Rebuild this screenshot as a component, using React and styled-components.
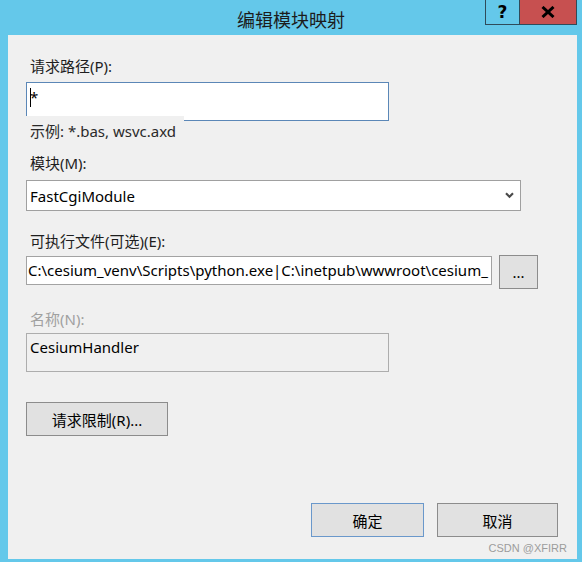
import React from "react";
import styled, { createGlobalStyle } from "styled-components";

const GlobalStyle = createGlobalStyle`
  html, body {
    margin: 0;
    padding: 0;
    background: #64c8ea;
  }
  body {
    font-family: "Noto Sans", "Noto Sans CJK SC", sans-serif;
    font-size: 15px;
    color: #1a1a1a;
  }
`;

const Window = styled.div`
  width: 582px;
  height: 562px;
  display: flex;
  flex-direction: column;
  background: #64c8ea;
  overflow: hidden;
`;

const TitleBar = styled.header`
  flex: none;
  height: 35px;
  position: relative;
  display: flex;
  justify-content: center;
`;

const Title = styled.div`
  font-family: "Noto Sans CJK SC", sans-serif;
  font-size: 18px;
  line-height: 26px;
  padding-top: 6px;
  color: #1c1c1c;
`;

const CaptionButtons = styled.div`
  position: absolute;
  top: 0;
  right: 5px;
  height: 25px;
  display: flex;
  box-sizing: border-box;
  border: 1px solid #2f4b5a;
  border-top: none;
`;

const CaptionButton = styled.div`
  width: ${(p) => p.w}px;
  display: flex;
  align-items: center;
  justify-content: center;
  background: ${(p) => (p.close ? "#c75050" : "transparent")};
  border-left: ${(p) => (p.close ? "1px solid #2f4b5a" : "none")};
  font-family: "DejaVu Sans", sans-serif;
  font-weight: 700;
  font-size: 17px;
  color: #000;
`;

const Client = styled.main`
  flex: 1;
  margin: 0 5px 3px 8px;
  background: #f0f0f0;
  position: relative;
  display: flex;
  flex-direction: column;
  align-items: flex-start;
  padding: 21px 0 22px 18px;
`;

const Label = styled.div`
  line-height: 20px;
  margin-top: ${(p) => p.top || 0}px;
  padding-left: 4px;
  color: ${(p) => (p.disabled ? "#a0a0a0" : "#1e1e1e")};
`;

const TextBox = styled.div`
  box-sizing: border-box;
  width: ${(p) => p.w}px;
  height: ${(p) => p.h}px;
  margin-top: ${(p) => p.top || 0}px;
  padding: 4px 3px;
  line-height: 19px;
  white-space: nowrap;
  overflow: hidden;
  background: ${(p) => (p.disabled ? "#f0f0f0" : "#fff")};
  border: 1px solid
    ${(p) => (p.focused ? "#5b87b7" : p.disabled ? "#adadad" : "#a3a3a3")};
  color: #000;
`;

const Caret = styled.span`
  display: inline-block;
  width: 1px;
  height: 19px;
  background: #000;
  vertical-align: top;
  margin-right: -1px;
`;

const Hint = styled.div`
  position: relative;
  margin-top: -5px;
  padding: 6px 8px 0 4px;
  line-height: 18px;
  background: #f0f0f0;
  color: #2a2a2a;
`;

const Select = styled.div`
  box-sizing: border-box;
  width: 495px;
  height: 31px;
  margin-top: 7px;
  padding: 0 6px 0 3px;
  display: flex;
  align-items: center;
  justify-content: space-between;
  background: #fff;
  border: 1px solid #a0a0a0;
  color: #000;
`;

const PathRow = styled.div`
  display: flex;
  align-items: flex-start;
  gap: 7px;
  margin-top: 4px;
`;

const PathBox = styled(TextBox)`
  padding: 0 1px;
  line-height: 27px;
  margin-top: 1px;
`;

const Button = styled.button`
  box-sizing: border-box;
  width: ${(p) => p.w}px;
  height: 34px;
  margin-top: ${(p) => p.top || 0}px;
  padding: 0;
  font-family: "Noto Sans", "Noto Sans CJK SC", sans-serif;
  font-size: 15px;
  color: #000;
  background: #e1e1e1;
  border: 1px solid ${(p) => (p.primary ? "#6a98cb" : "#8c8c8c")};
  border-radius: 0;
`;

const Footer = styled.div`
  margin-top: auto;
  align-self: stretch;
  display: flex;
  justify-content: flex-end;
  gap: 13px;
  padding-right: 19px;
`;

const Watermark = styled.div`
  position: absolute;
  right: 10px;
  bottom: 5px;
  font-family: "Liberation Sans", sans-serif;
  font-size: 11px;
  line-height: 12px;
  color: #9c9c9c;
`;

const Chevron = () => (
  <svg width="9" height="7" viewBox="0 0 9 7">
    <path d="M1 1.2 L4.5 4.8 L8 1.2" fill="none" stroke="#4a4a4a" strokeWidth="2.1" />
  </svg>
);

const CloseGlyph = () => (
  <svg width="14" height="12" viewBox="0 0 14 12">
    <path d="M1.5 1 L12.5 11 M12.5 1 L1.5 11" stroke="#000" strokeWidth="3" />
  </svg>
);

export default function App() {
  return (
    <>
      <GlobalStyle />
      <Window>
        <TitleBar>
          <Title>编辑模块映射</Title>
          <CaptionButtons>
            <CaptionButton w={33}>?</CaptionButton>
            <CaptionButton w={56} close>
              <CloseGlyph />
            </CaptionButton>
          </CaptionButtons>
        </TitleBar>
        <Client>
          <Label>请求路径(P):</Label>
          <TextBox w={363} h={39} top={6} focused style={{ paddingTop: 5 }}>
            <Caret />*
          </TextBox>
          <Hint>示例: *.bas, wsvc.axd</Hint>

          <Label top={13}>模块(M):</Label>
          <Select>
            <span>FastCgiModule</span>
            <Chevron />
          </Select>

          <Label top={20}>可执行文件(可选)(E):</Label>
          <PathRow>
            <PathBox w={466} h={29}>
              C:\cesium_venv\Scripts\python.exe|C:\inetpub\wwwroot\cesium_
            </PathBox>
            <Button w={39}>...</Button>
          </PathRow>

          <Label top={20} disabled>
            名称(N):
          </Label>
          <TextBox w={363} h={39} top={4} disabled>
            CesiumHandler
          </TextBox>

          <Button w={142} top={30}>
            请求限制(R)...
          </Button>

          <Footer>
            <Button w={113} primary>
              确定
            </Button>
            <Button w={121}>取消</Button>
          </Footer>
          <Watermark>CSDN @XFIRR</Watermark>
        </Client>
      </Window>
    </>
  );
}
